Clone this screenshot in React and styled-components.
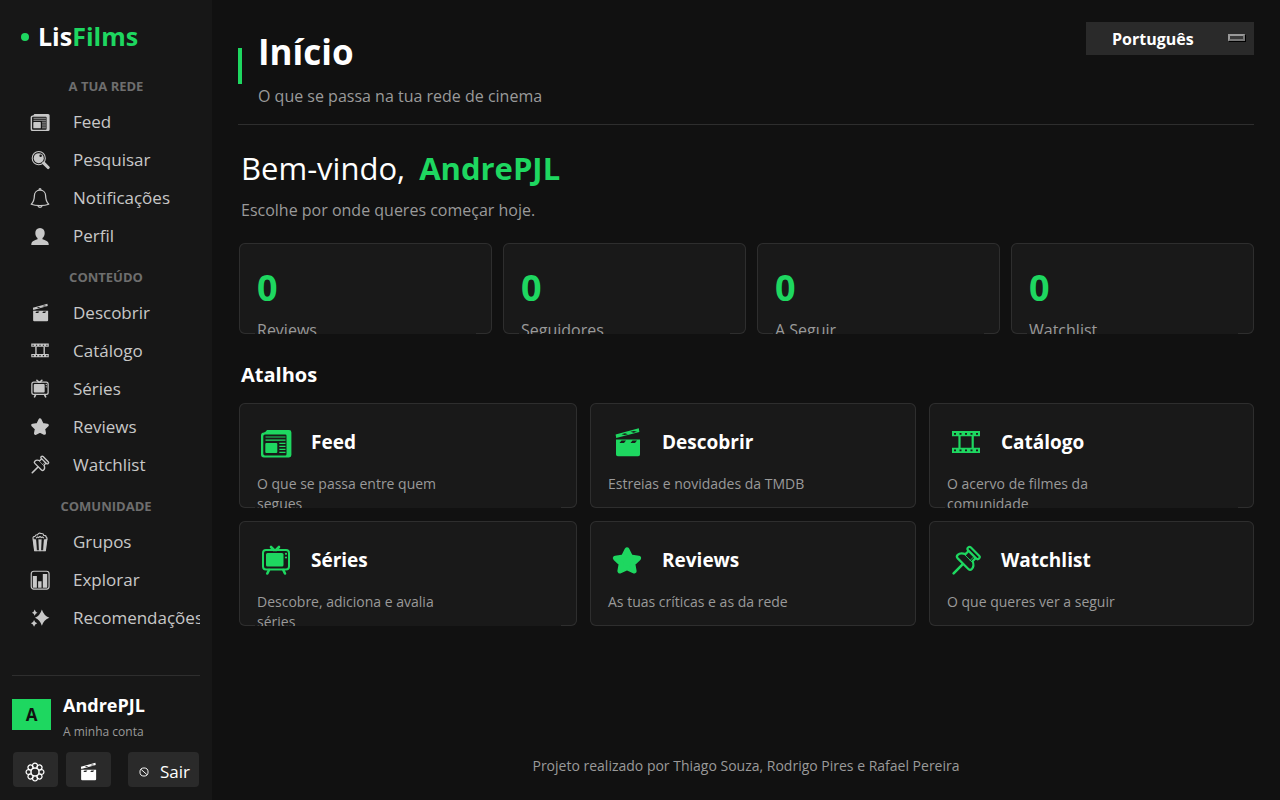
import React, { useState } from 'react';
import styled, { createGlobalStyle } from 'styled-components';

const colors = {
  page: '#111111',
  sidebar: '#171717',
  card: '#191919',
  control: '#2a2a2a',
  line: '#2e2e2e',
  green: '#1ed760',
  text: '#ffffff',
  nav: '#c8c8c8',
  muted: '#9a9a9a',
  section: '#6e6e6e'
};

const GlobalStyle = createGlobalStyle`
  * {
    box-sizing: border-box;
  }

  body {
    margin: 0;
    background: ${colors.page};
    color: ${colors.text};
    font-family: 'Open Sans', 'Noto Sans', sans-serif;
    font-size: 16px;
  }

  h1,
  h2,
  h3,
  p {
    margin: 0;
  }

  a {
    color: inherit;
    text-decoration: none;
  }

  button,
  select {
    font-family: inherit;
    color: inherit;
    border: 0;
    cursor: pointer;
  }
`;

const petals = [0, 45, 90, 135, 180, 225, 270, 315];

const shapes = {
  feed: (
    <>
      <path
        fill="currentColor"
        fillRule="evenodd"
        d="M7 3h22q2.400 0 2.400 2.400v22.600q0 2.400-2.400 2.400h-25q-3 0-3-3v-19q0-3 3-3q1.500 0 3-2.400zM5 7.500q-1.700 0-1.700 1.700v17.600q0 1.700 1.700 1.700h20.300q1.200 0 1.200-1.200v-18.600q0-1.200-1.200-1.200z"
      />
      <rect x="5.300" y="16" width="12" height="10" rx="1" fill="currentColor" />
      <path
        d="M5.500 10h20M5.500 13.200h20M19.300 16.300h6.200M19.300 19.300h6.200M19.300 22.300h6.200M19.300 25.300h6.200"
        stroke="currentColor"
        strokeWidth="1.200"
      />
    </>
  ),
  search: (
    <>
      <circle cx="14" cy="13" r="10.500" fill="none" stroke="currentColor" strokeWidth="1.700" />
      <circle cx="14" cy="13" r="8" fill="currentColor" />
      <circle cx="17" cy="9" r="2" fill={colors.sidebar} />
      <path d="M22 21l7 7" stroke="currentColor" strokeWidth="5" strokeLinecap="round" />
    </>
  ),
  bell: (
    <g fill="none" stroke="currentColor" strokeWidth="2" strokeLinejoin="round">
      <path d="M16 3.500c-5.500 0-9 4-9 9c0 6-1 9.500-5 13.500q5 2 14 2t14-2c-4-4-5-7.500-5-13.500c0-5-3.500-9-9-9z" />
      <path d="M14.500 3q0-2 1.500-2t1.500 2M12.500 28q.5 3 3.500 3t3.500-3" />
    </g>
  ),
  person: (
    <path
      fill="currentColor"
      d="M16 3c5 0 7.500 3.500 7.500 8c0 4-1.500 6.500-3.500 8v2c3 1.500 7.500 2 9 5q1 2 1 4.500h-28q0-2.500 1-4.500c1.500-3 6-3.500 9-5v-2c-2-1.500-3.500-4-3.500-8c0-4.500 2.500-8 7.500-8z"
    />
  ),
  clapper: (
    <>
      <path
        fill="currentColor"
        fillRule="evenodd"
        d="M5 12.500h24v15q0 1.800-1.800 1.800h-20.400q-1.800 0-1.800-1.800zM10.500 13.500l-2 2.500h4.500l2-2.500zM21.500 13.500l-2 2.500h4.500l2-2.500z"
      />
      <path
        fill="currentColor"
        fillRule="evenodd"
        d="M4.600 7.500l23.200-6.200l.6 3.600l-23.200 6.200zM10.500 7.200l3 .9l3.500-.9l-3-.9zM19.500 4.800l3 .9l3.500-.9l-3-.9z"
      />
    </>
  ),
  film: (
    <>
      <path
        fill="currentColor"
        fillRule="evenodd"
        d="M2 4h28v5.300h-28zM2 20.700h28v5.300h-28zM4 6v1.700h2v-1.700zM9.500 6v1.700h2v-1.700zM15 6v1.700h2v-1.700zM20.500 6v1.700h2v-1.700zM26 6v1.700h2v-1.700zM4 22.500v1.700h2v-1.700zM9.500 22.500v1.700h2v-1.700zM15 22.500v1.700h2v-1.700zM20.500 22.500v1.700h2v-1.700zM26 22.500v1.700h2v-1.700z"
      />
      <path d="M9.500 9v12M22.700 9v12" stroke="currentColor" strokeWidth="2.200" />
    </>
  ),
  tv: (
    <>
      <rect x="3" y="5" width="26" height="19.500" rx="3" fill="none" stroke="currentColor" strokeWidth="2" />
      <rect x="6" y="8" width="17.500" height="13.500" rx="1.500" fill="currentColor" />
      <circle cx="26" cy="8.800" r="1.100" fill="currentColor" />
      <circle cx="26" cy="12.500" r="1.100" fill="currentColor" />
      <path
        d="M11 2l3 3M19 2l-3 3M9 25l-1.700 3.500M23.300 25l1.700 3.500"
        stroke="currentColor"
        strokeWidth="2.600"
        strokeLinecap="round"
      />
    </>
  ),
  star: (
    <path
      fill="currentColor"
      stroke="currentColor"
      strokeWidth="5"
      strokeLinejoin="round"
      d="M16 4.800l3.500 7.100l8.100 1.200l-5.800 5.700l1.300 7.200l-7.100-3.300l-7.100 3.300l1.300-7.200l-5.800-5.700l8.100-1.200z"
    />
  ),
  pin: (
    <g
      transform="rotate(45 16 16)"
      fill="none"
      stroke="currentColor"
      strokeWidth="2.200"
      strokeLinejoin="round"
      strokeLinecap="round"
    >
      <rect x="8" y="3" width="15.500" height="4" rx="2" />
      <path d="M10.800 7.500v4c-3.500 1.500-5 3.500-5 6q0 2.500 2.500 2.500h15q2.500 0 2.500-2.500c0-2.500-1.500-4.500-5-6v-4" />
      <path d="M16 20.500v13" strokeWidth="2.600" />
      <path d="M11 12.500h9.500M18.500 7.500v5" strokeWidth="0.900" />
    </g>
  ),
  popcorn: (
    <g fill="none" stroke="currentColor" strokeWidth="1.900" strokeLinejoin="round">
      <path d="M5 11q-1-4 3-4q1-3 4-2.500q2-4 5.500-2q4-.5 4.500 3q4 0 4 3q2 1 1 3" />
      <path d="M10 10q1.500-3 4-1q2-3 4 0q2.500-2 4 1" />
      <path d="M5 11l2.500 19h17l2.500-19" />
      <path d="M5 11l2.500 19h3.500l-1.500-18zM13.700 12l.8 18h3l.8-18zM27 11l-2.500 19h-3.500l1.500-18z" fill="currentColor" strokeWidth="0.500" />
    </g>
  ),
  chart: (
    <>
      <rect x="2" y="2" width="28.500" height="28.500" rx="4" fill="none" stroke="currentColor" strokeWidth="1.900" />
      <path fill="currentColor" d="M4.500 9.500h6.500v19h-6.500zM13 18h5.500v10.500h-5.500zM20.500 6.500h7v22h-7z" />
    </>
  ),
  sparkles: (
    <path
      fill="currentColor"
      d="M19 2.500q3 10 12 13q-9 3-12 13q-3-10-11-13q8-3 11-13zM7.500 2.500q1 4 4.500 5q-3.500 1-4.500 5q-1-4-4.500-5q3.500-1 4.500-5zM6.500 19q1.200 4.500 5 5.500q-3.800 1-5 5.500q-1.200-4.500-5-5.500q3.800-1 5-5.500z"
    />
  ),
  gear: (
    <g fill="none" stroke="currentColor" strokeWidth="2">
      <circle cx="16" cy="16" r="6.500" strokeWidth="2.400" />
      {petals.map(angle => (
        <path
          key={angle}
          transform={`rotate(${angle} 16 16)`}
          d="M12.200 7c-1.500-7 9.100-7 7.600 0M12.200 7l1 2.200M19.800 7l-1 2.200"
        />
      ))}
    </g>
  ),
  exit: (
    <g fill="none" stroke="currentColor" strokeWidth="3">
      <circle cx="16" cy="16" r="13" />
      <path d="M7 8l18 16" />
    </g>
  )
};

const Icon = ({ name, size = 20 }) => (
  <Glyph width={size} height={size} viewBox="0 0 32 32" aria-hidden="true">
    {shapes[name]}
  </Glyph>
);

const sections = [
  {
    title: 'A TUA REDE',
    items: [
      { icon: 'feed', label: 'Feed' },
      { icon: 'search', label: 'Pesquisar' },
      { icon: 'bell', label: 'Notificações' },
      { icon: 'person', label: 'Perfil' }
    ]
  },
  {
    title: 'CONTEÚDO',
    items: [
      { icon: 'clapper', label: 'Descobrir' },
      { icon: 'film', label: 'Catálogo' },
      { icon: 'tv', label: 'Séries' },
      { icon: 'star', label: 'Reviews' },
      { icon: 'pin', label: 'Watchlist' }
    ]
  },
  {
    title: 'COMUNIDADE',
    items: [
      { icon: 'popcorn', label: 'Grupos' },
      { icon: 'chart', label: 'Explorar' },
      { icon: 'sparkles', label: 'Recomendações' }
    ]
  }
];

const stats = [
  { label: 'Reviews', value: 0 },
  { label: 'Seguidores', value: 0 },
  { label: 'A Seguir', value: 0 },
  { label: 'Watchlist', value: 0 }
];

const shortcuts = [
  { icon: 'feed', title: 'Feed', text: 'O que se passa entre quem segues' },
  { icon: 'clapper', title: 'Descobrir', text: 'Estreias e novidades da TMDB' },
  { icon: 'film', title: 'Catálogo', text: 'O acervo de filmes da comunidade' },
  { icon: 'tv', title: 'Séries', text: 'Descobre, adiciona e avalia séries' },
  { icon: 'star', title: 'Reviews', text: 'As tuas críticas e as da rede' },
  { icon: 'pin', title: 'Watchlist', text: 'O que queres ver a seguir' }
];

const App = () => {
  const [language, setLanguage] = useState('pt');

  return (
    <Layout>
      <GlobalStyle />

      <Sidebar>
        <Logo href="#inicio">
          <Dot />
          <span>
            Lis<Accent>Films</Accent>
          </span>
        </Logo>

        <Nav>
          {sections.map(section => (
            <React.Fragment key={section.title}>
              <SectionTitle>{section.title}</SectionTitle>
              {section.items.map(item => (
                <NavItem key={item.label} href={`#${item.icon}`}>
                  <Icon name={item.icon} />
                  <NavLabel>{item.label}</NavLabel>
                </NavItem>
              ))}
            </React.Fragment>
          ))}
        </Nav>

        <Account>
          <Profile>
            <Avatar>A</Avatar>
            <ProfileText>
              <UserName>AndrePJL</UserName>
              <AccountLink href="#conta">A minha conta</AccountLink>
            </ProfileText>
          </Profile>
          <Actions>
            <ActionButton type="button" aria-label="Definições">
              <Icon name="gear" />
            </ActionButton>
            <ActionButton type="button" aria-label="Filmes">
              <Icon name="clapper" />
            </ActionButton>
            <LogoutButton type="button">
              <Icon name="exit" size={10} />
              Sair
            </LogoutButton>
          </Actions>
        </Account>
      </Sidebar>

      <Main>
        <Header>
          <Heading>
            <Title>Início</Title>
            <Subtitle>O que se passa na tua rede de cinema</Subtitle>
          </Heading>
          <LanguagePicker>
            <LanguageSelect
              aria-label="Idioma"
              value={language}
              onChange={event => setLanguage(event.target.value)}
            >
              <option value="pt">Português</option>
              <option value="en">English</option>
            </LanguageSelect>
            <Indicator />
          </LanguagePicker>
        </Header>

        <Content>
          <Greeting>
            Bem-vindo, <UserAccent>AndrePJL</UserAccent>
          </Greeting>
          <Hint>Escolhe por onde queres começar hoje.</Hint>

          <Stats>
            {stats.map(stat => (
              <StatCard key={stat.label}>
                <StatValue>{stat.value}</StatValue>
                <StatLabel>{stat.label}</StatLabel>
              </StatCard>
            ))}
          </Stats>

          <ShortcutsTitle>Atalhos</ShortcutsTitle>

          <Shortcuts>
            {shortcuts.map(shortcut => (
              <ShortcutCard key={shortcut.title} href={`#${shortcut.icon}`}>
                <ShortcutHead>
                  <Icon name={shortcut.icon} size={32} />
                  <ShortcutName>{shortcut.title}</ShortcutName>
                </ShortcutHead>
                <ShortcutText>
                  <p>{shortcut.text}</p>
                </ShortcutText>
              </ShortcutCard>
            ))}
          </Shortcuts>
        </Content>

        <Footer>Projeto realizado por Thiago Souza, Rodrigo Pires e Rafael Pereira</Footer>
      </Main>
    </Layout>
  );
};

export default App;

const Glyph = styled.svg`
  display: block;
  flex: none;
`;

const Layout = styled.div`
  display: flex;
  min-height: 100vh;
`;

const Sidebar = styled.aside`
  display: flex;
  flex-direction: column;
  flex: 0 0 212px;
  min-width: 0;
  padding: 0 12px 13px;
  background: ${colors.sidebar};
`;

const Logo = styled.a`
  display: flex;
  align-items: center;
  gap: 9px;
  height: 64px;
  padding: 8px 0 0 9px;
  font-size: 25px;
  font-weight: 700;
`;

const Dot = styled.span`
  width: 8px;
  height: 8px;
  margin-top: 2px;
  border-radius: 50%;
  background: ${colors.green};
`;

const Accent = styled.span`
  color: ${colors.green};
`;

const Nav = styled.nav`
  display: flex;
  flex-direction: column;
  overflow: hidden;
`;

const SectionTitle = styled.h3`
  padding: 14px 0 9px;
  color: ${colors.section};
  font-size: 13px;
  line-height: 16px;
  text-align: center;
`;

const NavItem = styled.a`
  display: flex;
  align-items: center;
  gap: 23px;
  height: 38px;
  padding-left: 18px;
  color: ${colors.nav};
  font-size: 17px;
  white-space: nowrap;

  &:hover {
    color: ${colors.text};
  }
`;

const NavLabel = styled.span`
  padding-bottom: 2px;
`;

const Account = styled.div`
  margin-top: auto;
  border-top: 1px solid ${colors.line};
`;

const Profile = styled.div`
  display: flex;
  align-items: center;
  gap: 12px;
  height: 76px;
`;

const ProfileText = styled.div`
  padding-top: 5px;
`;

const Avatar = styled.div`
  width: 39px;
  height: 31px;
  background: ${colors.green};
  color: ${colors.page};
  font-size: 17px;
  font-weight: 700;
  line-height: 32px;
  text-align: center;
`;

const UserName = styled.div`
  font-size: 18px;
  font-weight: 700;
  line-height: 30px;
`;

const AccountLink = styled.a`
  display: block;
  color: ${colors.muted};
  font-size: 12px;
  line-height: 24px;
`;

const Actions = styled.div`
  display: flex;
  gap: 8px;
  padding: 0 1px;
`;

const ActionButton = styled.button`
  display: flex;
  align-items: center;
  justify-content: center;
  width: 45px;
  height: 35px;
  padding: 4px 1px 0 0;
  border-radius: 4px;
  background: ${colors.control};
`;

const LogoutButton = styled(ActionButton)`
  justify-content: flex-start;
  gap: 11px;
  width: 71px;
  margin-left: auto;
  padding-left: 11px;
  font-size: 17px;
`;

const Main = styled.main`
  display: flex;
  flex-direction: column;
  flex: 1;
  min-width: 0;
  padding: 22px 26px;
`;

const Header = styled.header`
  display: flex;
  align-items: flex-start;
  justify-content: space-between;
  padding-bottom: 14px;
  border-bottom: 1px solid ${colors.line};
`;

const Heading = styled.div`
  display: grid;
  grid-template-columns: 4px auto;
  column-gap: 16px;

  &::before {
    content: '';
    grid-row: 1 / 3;
    align-self: center;
    height: 36px;
    background: ${colors.green};
  }
`;

const Title = styled.h1`
  font-size: 35px;
  line-height: 60px;
`;

const Subtitle = styled.p`
  grid-column: 2;
  color: ${colors.muted};
  font-size: 16px;
  line-height: 28px;
`;

const LanguagePicker = styled.div`
  position: relative;
  width: 168px;
`;

const LanguageSelect = styled.select`
  appearance: none;
  display: block;
  width: 100%;
  height: 33px;
  padding: 0 34px 0 26px;
  border-radius: 0;
  background: ${colors.control};
  font-size: 16px;
  font-weight: 700;
`;

const Indicator = styled.span`
  position: absolute;
  top: 12px;
  right: 9px;
  width: 17px;
  height: 7px;
  border: 2px solid;
  border-color: #999999 #777777 #777777 #999999;
  background: #3a3a3a;
  box-shadow: 1px 1px 0 #000000;
  pointer-events: none;
`;

const Content = styled.section`
  padding: 19px 0 0 1px;
`;

const Greeting = styled.h2`
  padding-left: 2px;
  font-size: 31px;
  font-weight: 400;
  line-height: 48px;
`;

const UserAccent = styled.strong`
  margin-left: 6px;
  color: ${colors.green};
`;

const Hint = styled.p`
  padding-left: 2px;
  color: ${colors.muted};
  font-size: 16px;
  line-height: 36px;
`;

const Stats = styled.div`
  display: grid;
  grid-template-columns: 253fr 243fr 243fr 243fr;
  gap: 11px;
  margin-top: 15px;
`;

/* the frame is an inset shadow so that the labels can run over its lower edge */
const Card = styled.div`
  padding: 0 16px;
  border-radius: 6px;
  background: ${colors.card};
  box-shadow: inset 0 0 0 1px ${colors.line};
  overflow: hidden;
`;

const StatCard = styled(Card)`
  height: 91px;
  padding-top: 21px;
`;

const StatValue = styled.div`
  padding-left: 2px;
  color: ${colors.green};
  font-size: 36px;
  font-weight: 700;
  line-height: 48px;
`;

const StatLabel = styled.div`
  margin-top: 6px;
  padding-left: 2px;
  background: ${colors.card};
  color: ${colors.muted};
  font-size: 16px;
  line-height: 24px;
`;

const ShortcutsTitle = styled.h2`
  padding: 24px 0 12px 2px;
  font-size: 20px;
  line-height: 33px;
`;

const Shortcuts = styled.div`
  display: grid;
  grid-template-columns: 338fr 326fr 325fr;
  gap: 13px;
`;

const ShortcutCard = styled(Card).attrs({ as: 'a' })`
  height: 105px;
  padding-top: 20px;
`;

const ShortcutHead = styled.div`
  display: flex;
  align-items: center;
  gap: 19px;
  height: 40px;
  padding-left: 5px;
  color: ${colors.green};
`;

const ShortcutName = styled.h3`
  padding-bottom: 2px;
  color: ${colors.text};
  font-size: 19px;
  line-height: 36px;
`;

const ShortcutText = styled.div`
  margin-top: 11px;
  padding-left: 2px;
  background: ${colors.card};
  color: ${colors.muted};
  font-size: 14px;
  line-height: 20px;

  p {
    max-width: 208px;
  }
`;

const Footer = styled.footer`
  margin-top: auto;
  color: ${colors.muted};
  font-size: 14px;
  line-height: 24px;
  text-align: center;
`;
